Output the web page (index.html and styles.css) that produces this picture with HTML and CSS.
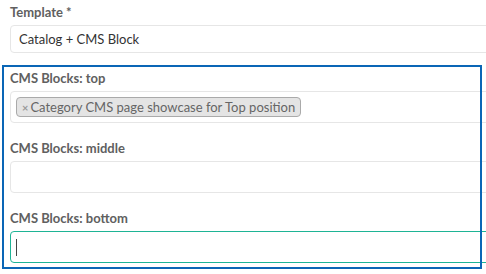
FILE: index.html
```html
<!DOCTYPE html>
<html lang="en">
<head>
    <meta charset="UTF-8">
    <meta name="viewport" content="width=device-width, initial-scale=1.0">
    <title>Category Template</title>
    <link rel="stylesheet" href="styles.css">
</head>
<body>
    <div class="form">
        <!-- Template select -->
        <div class="field field-template">
            <label class="label">Template *</label>
            <div class="input input-sm">Catalog + CMS Block</div>
        </div>

        <!-- CMS blocks group -->
        <div class="group">
            <div class="field">
                <label class="label">CMS Blocks: top</label>
                <div class="input">
                    <span class="tag"><span class="tag-remove">×</span>Category CMS page showcase for Top position</span>
                </div>
            </div>
            <div class="field">
                <label class="label">CMS Blocks: middle</label>
                <div class="input"></div>
            </div>
            <div class="field">
                <label class="label">CMS Blocks: bottom</label>
                <div class="input input-focus"><span class="caret"></span></div>
            </div>
        </div>
    </div>
</body>
</html>
```

FILE: styles.css
```css
body {
    margin: 0;
    padding: 0;
    background-color: #fff;
    color: #333;
    font-family: 'Lato', 'Liberation Sans', sans-serif;
    overflow: hidden;
}
.form {
    padding-top: 4px;
}
.field {
    padding-left: 10px;
    margin-bottom: 17px;
}
.field-template {
    margin-bottom: 12px;
}
.label {
    display: block;
    font-size: 13px;
    font-weight: bold;
    line-height: 16px;
    color: #606060;
    margin-bottom: 5px;
}
.input {
    box-sizing: border-box;
    width: 520px;
    height: 32px;
    border: 1px solid #e6e6e6;
    border-radius: 4px;
    padding: 5px;
    font-size: 13px;
    display: flex;
    align-items: flex-start;
}
.input-sm {
    height: 28px;
    padding: 0 8px;
    align-items: center;
    color: #333;
}
.input-focus {
    border-color: #1eb495;
    align-items: center;
}
.group {
    position: relative;
    margin-left: 2px;
    width: 480px;
    padding-top: 5px;
    padding-bottom: 6px;
}
.group .field {
    padding-left: 8px;
}
.group .field:last-child {
    margin-bottom: 0;
}
.group::after {
    content: "";
    position: absolute;
    top: 0;
    left: 0;
    right: 0;
    bottom: 0;
    border: 2px solid #0a66b6;
    pointer-events: none;
}
.tag {
    box-sizing: border-box;
    height: 20px;
    line-height: 18px;
    background-color: #e4e4e4;
    border: 1px solid #aaa;
    border-radius: 4px;
    padding: 0 5px;
    font-size: 13px;
    color: #666;
}
.tag-remove {
    color: #999;
    font-weight: bold;
    font-size: 11px;
    margin-right: 2px;
}
.caret {
    display: block;
    width: 1px;
    height: 17px;
    background-color: #444;
}
```
